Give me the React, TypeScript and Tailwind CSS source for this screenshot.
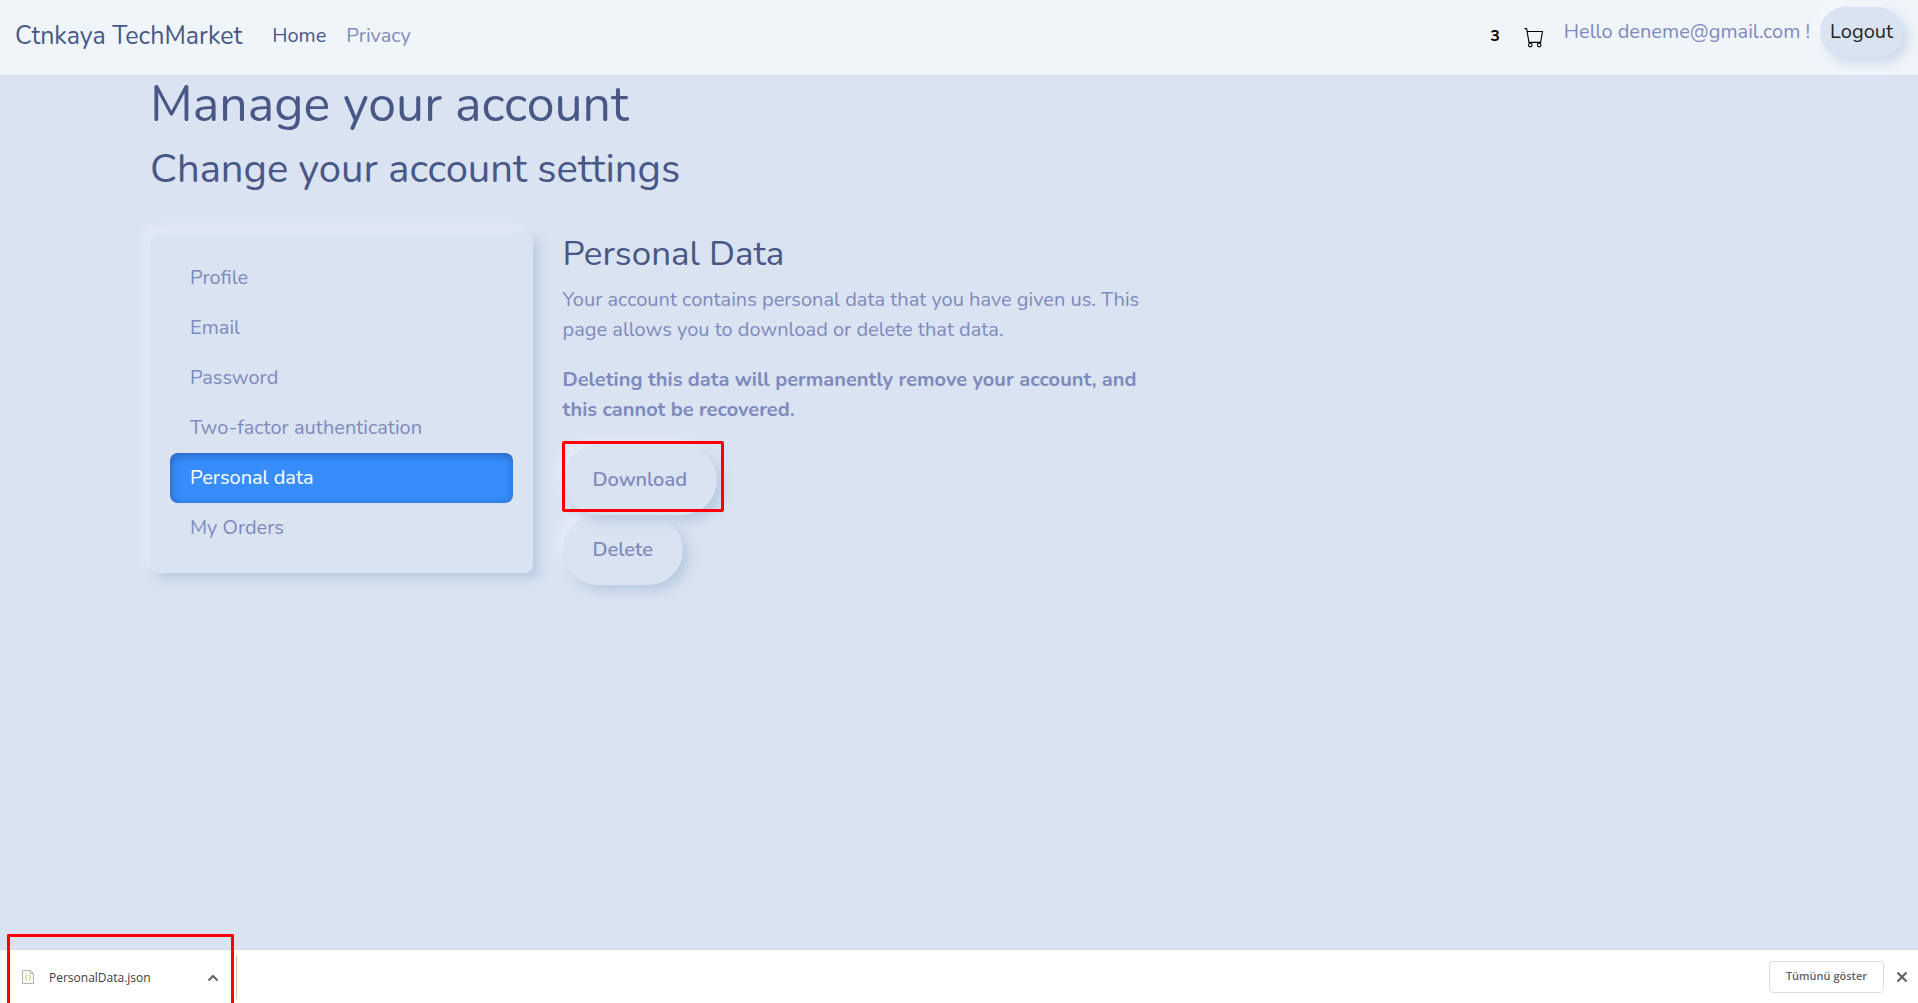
import { ReactNode } from 'react';

const raised = 'shadow-[6px_6px_12px_#b8cbe1,-6px_-6px_12px_rgba(255,255,255,0.35)]';

const menu = ['Profile', 'Email', 'Password', 'Two-factor authentication', 'Personal data', 'My Orders'];

function CartIcon() {
  return (
    <svg viewBox="0 0 20 20" className="h-5 w-5" fill="none" stroke="#000" strokeWidth="1.1" aria-hidden="true">
      <path d="M0.5 0.6H2.6L5 14.4H16.6L18.5 3.5H3.2" />
      <circle cx="6.3" cy="17.1" r="1.8" />
      <circle cx="15.2" cy="17.1" r="1.8" />
    </svg>
  );
}

function FileIcon() {
  return (
    <svg viewBox="0 0 12 14" className="h-3.5 w-3" fill="none" aria-hidden="true">
      <path d="M0.5 0.5H8.5L11.5 3.5V13.5H0.5Z" fill="#fafafa" stroke="#b4b4b4" />
      <path d="M8.5 0.5V3.5H11.5" stroke="#b4b4b4" />
      <path d="M5 4.7C3.6 4.7 4.6 7 3.2 7.3C4.6 7.6 3.6 10 5 10M7 4.7C8.4 4.7 7.4 7 8.8 7.3C7.4 7.6 8.4 10 7 10" stroke="#b5c45e" />
    </svg>
  );
}

function PillButton({ children }: { children: ReactNode }) {
  return (
    <button
      type="button"
      className={`h-[70px] rounded-full bg-[#d9e3f1] px-[30px] text-xl font-semibold text-[#7e8abc] ${raised}`}
    >
      {children}
    </button>
  );
}

export default function App() {
  return (
    <div className="flex min-h-screen flex-col bg-[#d9e3f1] font-['Nunito','Lato',sans-serif] text-xl leading-[30px] text-[#7e8abc]">
      <header className="flex h-[75px] items-center justify-between bg-[#f0f5fa] pr-[15px] pl-[15px]">
        <nav className="flex items-center pb-1">
          <a href="#" className="mr-5 text-[25px] leading-[38px] text-[#485785]">Ctnkaya TechMarket</a>
          <a href="#" className="px-2.5 text-[#485785]">Home</a>
          <a href="#" className="px-2.5">Privacy</a>
        </nav>
        <div className="flex items-center">
          <span className="mr-6 pb-1 text-base font-bold text-black">3</span>
          <a href="#" aria-label="Cart" className="mr-5"><CartIcon /></a>
          <a href="#" className="mr-2.5 pb-3">Hello deneme@gmail.com !</a>
          <button type="button" className="mb-3 h-[50px] rounded-full bg-[#d9e3f1] px-2.5 text-[#212529] shadow-[6px_6px_12px_#cddaea,-6px_-6px_12px_rgba(255,255,255,0.3)]">
            Logout
          </button>
        </div>
      </header>

      <main className="mx-auto w-full max-w-[1650px] grow pr-3.5 pl-4">
        <h1 className="text-[50px] leading-[60px] text-[#485785]">Manage your account</h1>
        <h2 className="mt-2.5 text-[40px] leading-[48px] text-[#485785]">Change your account settings</h2>
        <div className="mt-10 grid grid-cols-4 gap-[30px]">
          <ul className={`self-start rounded-lg bg-[#d9e3f1] p-5 ${raised}`}>
            {menu.map((item) => (
              <li key={item}>
                <a
                  href="#"
                  className={
                    item === 'Personal data'
                      ? 'block rounded-lg bg-[#378dfc] px-5 py-2.5 text-white shadow-[inset_2px_3px_8px_rgba(30,60,120,0.4),inset_-2px_0_6px_rgba(30,60,120,0.15)]'
                      : 'block px-5 py-2.5'
                  }
                >
                  {item}
                </a>
              </li>
            ))}
          </ul>
          <section className="col-span-3 grid grid-cols-2 gap-[30px]">
            <div>
              <h3 className="text-[35px] leading-[42px] text-[#485785]">Personal Data</h3>
              <p className="mt-2.5">
                Your account contains personal data that you have given us. This page allows you to download or delete that data.
              </p>
              <p className="mt-5 font-bold">
                Deleting this data will permanently remove your account, and this cannot be recovered.
              </p>
              <div className="mt-5 flex flex-col items-start">
                <div className="relative">
                  <PillButton>Download</PillButton>
                  <div className="pointer-events-none absolute -top-1 -right-[7px] -left-px z-10 h-[71px] rounded-xs border-3 border-[#ff0000]" />
                </div>
                <PillButton>Delete</PillButton>
              </div>
            </div>
          </section>
        </div>
      </main>

      <footer className="relative flex h-[54px] items-center justify-between border-t border-[#d5d9e0] bg-white pr-2.5 font-['Open_Sans',sans-serif] text-xs text-[#3c4043]">
        <div className="flex h-11 w-[237px] items-center border-r border-[#c8c8c8] pr-[17px] pl-[22px]">
          <FileIcon />
          <span className="ml-[15px] grow pt-0.5">PersonalData.json</span>
          <button type="button" aria-label="File options" className="pt-0.5">
            <svg viewBox="0 0 12 12" className="h-3 w-3" fill="none" stroke="#5f6368" strokeWidth="2" aria-hidden="true"><path d="M1.5 8.5L6 4L10.5 8.5" /></svg>
          </button>
        </div>
        <div className="pointer-events-none absolute -top-4 left-[7px] h-[69px] w-[227px] rounded-t-xs border-3 border-b-0 border-[#ff0000]" />
        <div className="flex items-center gap-3">
          <button type="button" className="h-8 rounded border border-[#dadce0] px-4 text-[11px] font-semibold text-[#5f6368]">
            Tümünü göster
          </button>
          <button type="button" aria-label="Close">
            <svg viewBox="0 0 12 12" className="h-3 w-3" fill="none" stroke="#5f6368" strokeWidth="2.2" aria-hidden="true"><path d="M1.5 1.5L10.5 10.5M10.5 1.5L1.5 10.5" /></svg>
          </button>
        </div>
      </footer>
    </div>
  );
}
